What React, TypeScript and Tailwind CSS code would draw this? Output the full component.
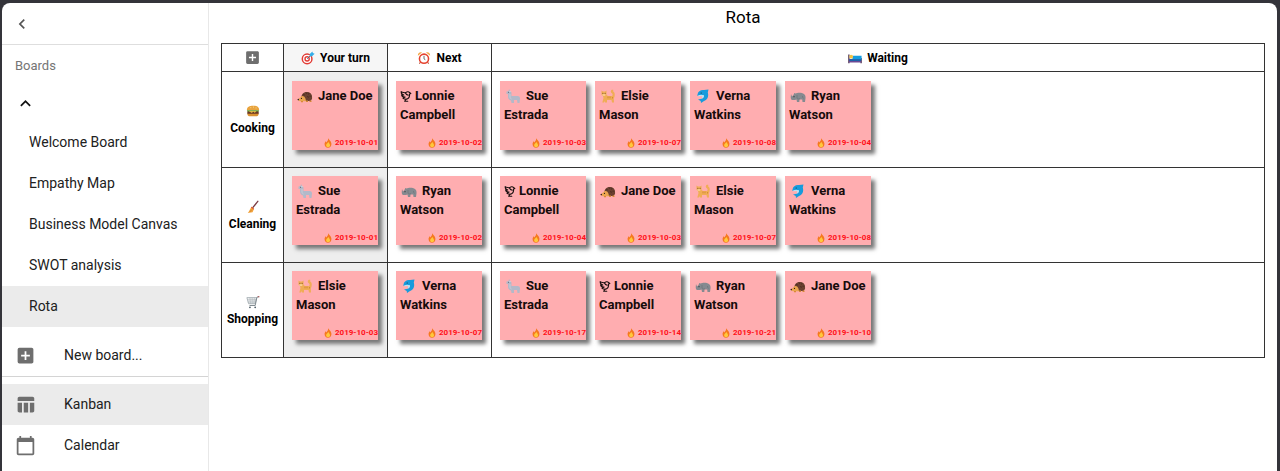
import React from "react";
import { MdAddBox, MdTableChart, MdCalendarToday, MdChevronLeft, MdExpandLess } from "react-icons/md";

type IconName =
  | "hedgehog" | "dove" | "llama" | "cat" | "dolphin" | "rhino"
  | "burger" | "broom" | "cart" | "target" | "clock" | "bed" | "fire";

const drawings: Record<IconName, React.ReactNode> = {
  hedgehog: (
    <>
      <path d="M4.500 9C4.500 5.500 7 4 10 4c3.500 0 5.500 2.500 5 7l-1.500 2H6z" fill="#6b4030" />
      <path d="M6 6.500l2 .6M9 4.500l1 1.500M12 5l-.5 1.500M14.500 8l-2 .3M10 8.500l2 .8" stroke="#472b20" strokeWidth=".8" />
      <path d="M5.500 8C4 8 3 10 1 11.500c0 1.200 1.500 1.800 3 1.800h5c0-2-1-5.300-3.500-5.300z" fill="#eba54f" />
      <path d="M4 13h2v1.200H4zM9 12.500h2v1.500H9zM12.500 12.500h2V14h-2z" fill="#d88a37" />
      <circle cx="1.300" cy="11.600" r=".8" fill="#34231d" />
      <circle cx="4.500" cy="10.400" r=".6" fill="#34231d" />
    </>
  ),
  dove: (
    <g fill="none" stroke="#1b1010" strokeWidth="1.300" strokeLinejoin="round" strokeLinecap="round">
      <path d="M2.500 3c1.500 1 3 .8 5 1.500C8.500 3 11 2.500 12 4l1.500 1-1.500.8c.5 3-1 5.700-4 5.900-1.500 0-2.700-.5-3.500-1.200l2.500-1.300C5 9.300 3.200 8 3 6.700c.8.400 1.700.4 2.500.2C4 6.500 2.500 5 2.500 3z" />
      <path d="M7.500 4.500c.3 1.500 1.500 2.500 3 2.500M8 11.700l-1.500 2.300h3.500" />
    </g>
  ),
  llama: (
    <>
      <path d="M1.500 3.500l2-.5.500-2 1.200 2 1.300 1.500V8h6c1.800 0 2.500 1 2.500 2.500L14.500 15h-2l-.5-3H9v3H6.500L6 12.500C4 12 3 10.500 3 8.500V6H1.500z" fill="#b3b9c9" />
      <path d="M4 3.500h2M5 6v3c0 1 .5 1.500 1.500 2" fill="none" stroke="#cdd2dc" strokeWidth=".8" />
      <circle cx="3.500" cy="4.300" r=".5" fill="#4f5665" />
    </>
  ),
  cat: (
    <>
      <path d="M1.500 2.500l1.500 1h2l1.500-1V7l1.500 1h3.500c1 0 1.300-.8 1-2-.2-.8-1.700-1.200-1.700-2.300C10.800 2 12 1.500 13.400 2l-.4 1.200c1.600.7 2 2.500 1.600 4.800-.2 1.500-.8 2-.8 3l.2 3.500h-2L11.500 12H7v2.500H5L4.500 13 4 14.500H2.300L3.500 10 3 8C1.800 7.500 1.300 6.500 1.500 5z" fill="#f0ad55" />
      <path d="M2.500 6.500h2.800v1.100H2.500z" fill="#ffe6bd" />
      <circle cx="2.900" cy="5.300" r=".5" fill="#5b3a20" />
      <circle cx="5.100" cy="5.300" r=".5" fill="#5b3a20" />
      <path d="M8 8.500v1.800M10 8.500v1.800M12.500 9v1.500" stroke="#c9792d" strokeWidth=".7" />
    </>
  ),
  dolphin: (
    <>
      <path d="M2.500 6.500C3 3 6 1.500 9 2l4.500-.5-.7 3c1.200 4-.6 7.500-3.800 8.500l-3 2-.3-2L3 11.500l3.500-.7c1.700-.6 2.700-1.700 2.500-3.300L5.500 8l-3 0z" fill="#189bdc" />
      <path d="M3.200 7.300l3-.5L9 7.300c.2 2-1 3-2.500 3.500.8-1 .8-2 .3-2.700l-3.600.1z" fill="#b9e3f5" />
      <circle cx="6.200" cy="5" r=".6" fill="#12384b" />
    </>
  ),
  rhino: (
    <>
      <path d="M1 6l1 2.500L3.500 7 4.200 5l1.300.5c2-1 6.500-1 8.500.5 1.500 1 1.700 3 1.500 4.500l-.5 3.500h-2.500l-.3-2.500H9.500L9.300 14H7L6.500 11.500c-1.500.5-4 1-5 .2C.5 10.500.7 9 1 6z" fill="#858a90" />
      <path d="M7 7v3c1 1 2 1.200 3 .5M12.500 8c0 1.500.5 2 1 2.500" stroke="#6d7379" strokeWidth=".7" fill="none" />
      <circle cx="4" cy="8.700" r=".6" fill="#2f3336" />
    </>
  ),
  burger: (
    <>
      <path d="M1 7c0-4 3-5 7-5s7 1 7 5z" fill="#e8a33d" />
      <path d="M1 7h14l-1 2H2z" fill="#5d9c35" />
      <path d="M1.500 8.500h13v2.800h-13z" fill="#6a3724" />
      <path d="M3 8.200h9l-2 1.700-1.500-1-2 1z" fill="#ffd34e" />
      <path d="M1.500 11h13c0 2-1.500 3-3 3h-7c-1.500 0-3-1-3-3z" fill="#d99132" />
      <path d="M5 4.200h1M8 3.500h1M11 4.500h1" stroke="#fff0bd" strokeWidth=".8" />
    </>
  ),
  broom: (
    <>
      <path d="M13.500 1.500L7.500 9" stroke="#7a3a42" strokeWidth="1.500" strokeLinecap="round" />
      <path d="M6.200 7.800l3 2.200-1.700 4-5.500.8c1.700-1.500 2.400-4 4.200-7z" fill="#f2a33c" />
      <path d="M6 8.200l3 2.200" stroke="#d93f33" strokeWidth="1.100" />
      <path d="M4.500 13.500l2-2.500" stroke="#b96f20" strokeWidth=".6" />
    </>
  ),
  cart: (
    <>
      <path d="M1 3h11l-1.500 7H3z" fill="#f3f5f6" stroke="#9aa3a9" strokeWidth=".9" />
      <path d="M1.500 5.500h10M2 8h9M4.500 3l.5 7M7 3v7M9.500 3L9 10" stroke="#a3abb0" strokeWidth=".7" />
      <path d="M14.500 2l-2 .5-2 9.500H4" fill="none" stroke="#7d878d" strokeWidth="1.100" />
      <path d="M13.500 2h1.800" stroke="#a34a4a" strokeWidth="1.200" />
      <circle cx="4.500" cy="14" r="1" fill="#495963" />
      <circle cx="10.500" cy="14" r="1" fill="#495963" />
    </>
  ),
  target: (
    <>
      <circle cx="7" cy="9" r="5.500" fill="#fff" stroke="#e23b35" strokeWidth="1.700" />
      <circle cx="7" cy="9" r="2.400" fill="#fff" stroke="#e23b35" strokeWidth="1.600" />
      <path d="M7 9l5-5" stroke="#39718f" strokeWidth="1" />
      <path d="M10 3.500L13 .5l.6 1.900 2 .6-3 3-2.400.2z" fill="#35aee9" />
    </>
  ),
  clock: (
    <>
      <path d="M4 12.500l-1.300 2M12 12.500l1.300 2" stroke="#bd5740" strokeWidth="1.300" />
      <circle cx="8" cy="8.800" r="5.200" fill="#fff" stroke="#e5432f" strokeWidth="1.800" />
      <path d="M1 5.500C.8 2.500 3 .8 5.700 1.700zM15 5.500c.2-3-2-4.700-4.700-3.800z" fill="#f2a744" />
      <path d="M8 5.500V9l1.500 1" fill="none" stroke="#454545" strokeWidth=".9" />
    </>
  ),
  bed: (
    <>
      <path d="M1 4v10M15 8v6" stroke="#57405a" strokeWidth="1.600" />
      <path d="M1 9h14v4H1z" fill="#6d4a94" />
      <path d="M5 5.500h10.500V10H5z" fill="#159de0" />
      <path d="M1.500 9.500h13.500v2H1.500z" fill="#1b62a8" />
      <circle cx="3.600" cy="6.500" r="2.200" fill="#f6c344" />
    </>
  ),
  fire: (
    <>
      <path d="M8.500 0c.5 3 5 5 5 9.500 0 3.500-2.300 6-5.500 6s-5.500-2.500-5.500-6c0-2 1-3.500 2-4.500l1 2C6.500 5.500 8.500 3.500 8.500 0z" fill="#f5791f" />
      <path d="M8.500 6c.2 2 2.800 3 2.800 5.500 0 1.900-1.300 3-3.100 3S5 13.400 5 11.500C5 9.500 8 8.500 8.500 6z" fill="#ffc83c" />
    </>
  ),
};

function Glyph({ name, className }: { name: IconName; className: string }) {
  return (
    <svg viewBox="0 0 16 16" aria-hidden="true" className={`inline-block ${className}`}>
      {drawings[name]}
    </svg>
  );
}

interface Person {
  name: string;
  icon: IconName;
}

const jane: Person = { name: "Jane Doe", icon: "hedgehog" };
const lonnie: Person = { name: "Lonnie Campbell", icon: "dove" };
const sue: Person = { name: "Sue Estrada", icon: "llama" };
const elsie: Person = { name: "Elsie Mason", icon: "cat" };
const verna: Person = { name: "Verna Watkins", icon: "dolphin" };
const ryan: Person = { name: "Ryan Watson", icon: "rhino" };

type Turn = [Person, string];

const rows: { label: string; icon: IconName; now: Turn; next: Turn; waiting: Turn[] }[] = [
  {
    label: "Cooking",
    icon: "burger",
    now: [jane, "2019-10-01"],
    next: [lonnie, "2019-10-02"],
    waiting: [[sue, "2019-10-03"], [elsie, "2019-10-07"], [verna, "2019-10-08"], [ryan, "2019-10-04"]],
  },
  {
    label: "Cleaning",
    icon: "broom",
    now: [sue, "2019-10-01"],
    next: [ryan, "2019-10-02"],
    waiting: [[lonnie, "2019-10-04"], [jane, "2019-10-03"], [elsie, "2019-10-07"], [verna, "2019-10-08"]],
  },
  {
    label: "Shopping",
    icon: "cart",
    now: [elsie, "2019-10-03"],
    next: [verna, "2019-10-07"],
    waiting: [[sue, "2019-10-17"], [lonnie, "2019-10-14"], [ryan, "2019-10-21"], [jane, "2019-10-10"]],
  },
];

function Card({ turn: [person, date] }: { turn: Turn }) {
  return (
    <article className="flex h-[69px] w-[86px] flex-col justify-between bg-[#ffadb0] shadow-[4px_4px_4px_#777]">
      <h3 className="pt-[5px] pl-1 text-[13px] leading-[19px] font-bold text-[#160b0b]">
        <Glyph
          name={person.icon}
          className={person.icon === "dove" ? "mr-[2px] -ml-px h-[14px] w-[14px] align-[-3px]" : "mr-[5px] ml-px h-4 w-4 align-[-4px]"}
        />
        {person.name}
      </h3>
      <p className="flex items-center justify-end gap-[2px] text-[8px] leading-[14px] font-bold text-[#ff1018]">
        <Glyph name="fire" className="h-[10px] w-[10px]" />
        <time>{date}</time>
      </p>
    </article>
  );
}

const boards = ["Welcome Board", "Empathy Map", "Business Model Canvas", "SWOT analysis", "Rota"];

function Sidebar() {
  return (
    <aside className="flex w-[207px] shrink-0 flex-col border-r border-[#e8e8e8] text-[14px] text-[#212121]">
      <div className="flex h-[42px] shrink-0 items-center border-b border-[#dedede] pl-[10px]">
        <button aria-label="Collapse sidebar">
          <MdChevronLeft size={20} color="#555" />
        </button>
      </div>
      <h2 className="flex h-[42px] items-center pl-[13px] text-[13px] text-[#757575]">Boards</h2>
      <button aria-label="Toggle boards" className="flex h-[35px] items-center pb-[3px] pl-[13px]">
        <MdExpandLess size={21} color="#111" />
      </button>
      <nav className="flex flex-col">
        {boards.map((board) => (
          <a
            key={board}
            href="#"
            className={`flex h-[41px] items-center pl-[27px] ${board === "Rota" ? "bg-[#ebebeb]" : ""}`}
          >
            {board}
          </a>
        ))}
      </nav>
      <div className="border-b border-[#d4d4d4] pt-[8px]">
        <button className="flex h-[41px] w-full items-center gap-[28px] pl-[13px]">
          <MdAddBox size={21} color="#6e6e6e" />
          New board...
        </button>
      </div>
      <nav className="flex flex-col pt-[7px]">
        <a href="#" className="flex h-[41px] items-center gap-[28px] bg-[#ebebeb] pl-[13px]">
          <MdTableChart size={21} color="#6e6e6e" />
          Kanban
        </a>
        <a href="#" className="flex h-[41px] items-center gap-[28px] pl-[13px]">
          <MdCalendarToday size={21} color="#6e6e6e" />
          Calendar
        </a>
      </nav>
    </aside>
  );
}

const cell = "border-r border-b border-[#333] p-0";

function Heading({ icon, label, className }: { icon: IconName; label: string; className: string }) {
  return (
    <th scope="col" className={`${cell} ${className}`}>
      <div className="flex items-center justify-center gap-[5px]">
        <Glyph name={icon} className="h-[14px] w-[14px]" />
        {label}
      </div>
    </th>
  );
}

export default function App() {
  return (
    <div className="min-h-screen bg-[#34343a] pt-[3px] pr-[3px] pl-[2px] font-['Roboto',sans-serif]">
      <div className="flex min-h-[468px] overflow-hidden rounded-t-[8px] bg-white">
        <Sidebar />
        <main className="min-w-0 flex-1 pr-[12px] pl-[12px]">
          <h1 className="h-10 text-center text-[17px] leading-[29px] text-black">Rota</h1>
          <table className="w-full table-fixed border-separate border-spacing-0 border-t border-l border-[#333] text-[12px] text-black">
            <colgroup>
              <col className="w-[62px]" />
              <col className="w-[104px]" />
              <col className="w-[104px]" />
              <col />
            </colgroup>
            <thead>
              <tr className="h-[28px]">
                <th className={cell}>
                  <button aria-label="Add" className="flex w-full justify-center">
                    <MdAddBox size={17} color="#6e6e6e" />
                  </button>
                </th>
                <Heading icon="target" label="Your turn" className="bg-[#f6f6f6]" />
                <Heading icon="clock" label="Next" className="" />
                <Heading icon="bed" label="Waiting" className="" />
              </tr>
            </thead>
            <tbody>
              {rows.map((row) => (
                <tr key={row.label} className="h-[95px] first:h-24">
                  <th scope="row" className={cell}>
                    <div className="flex flex-col items-center pt-px leading-4">
                      <Glyph name={row.icon} className="mb-[2px] h-[14px] w-[14px]" />
                      {row.label}
                    </div>
                  </th>
                  <td className={`${cell} bg-[#eee] pb-[17px] pl-2 align-bottom`}>
                    <Card turn={row.now} />
                  </td>
                  <td className={`${cell} pb-[17px] pl-2 align-bottom`}>
                    <Card turn={row.next} />
                  </td>
                  <td className={`${cell} pb-[17px] pl-2 align-bottom`}>
                    <div className="flex gap-[9px]">
                      {row.waiting.map((turn) => (
                        <Card key={turn[0].name} turn={turn} />
                      ))}
                    </div>
                  </td>
                </tr>
              ))}
            </tbody>
          </table>
        </main>
      </div>
    </div>
  );
}
